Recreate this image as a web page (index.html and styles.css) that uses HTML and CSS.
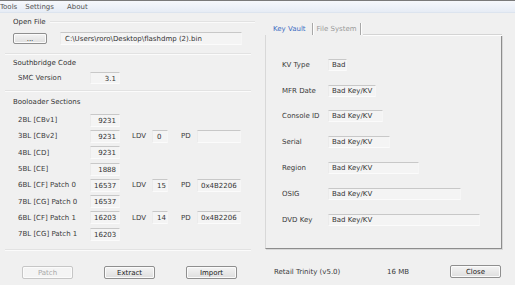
FILE: index.html
```html
<!DOCTYPE html>
<html lang="en">
<head>
  <meta charset="UTF-8" />
  <title>Flash Tool</title>
  <link rel="stylesheet" href="styles.css">
</head>
<body>
  <div class="menubar">
    <span class="menu-item">Tools</span>
    <span class="menu-item">Settings</span>
    <span class="menu-item">About</span>
  </div>

  <div class="main">
    <div class="left">
      <div class="group-title with-line">Open File</div>
      <div class="file-row">
        <button class="btn btn-browse">...</button>
        <div class="field path">C:\Users\roro\Desktop\flashdmp (2).bin</div>
      </div>

      <div class="sep sep-1"></div>

      <div class="group-title title-smc">Southbridge Code</div>
      <div class="row smc-row">
        <span class="row-label">SMC Version</span>
        <div class="field num smc-val">3.1</div>
      </div>

      <div class="sep sep-2"></div>

      <div class="group-title title-boot">Booloader Sections</div>
      <div class="boot-rows">
        <div class="row boot-row">
          <span class="row-label">2BL [CBv1]</span>
          <div class="field num">9231</div>
        </div>
        <div class="row boot-row">
          <span class="row-label">3BL [CBv2]</span>
          <div class="field num">9231</div>
          <span class="small-label">LDV</span>
          <div class="field ldv">0</div>
          <span class="small-label pd-label">PD</span>
          <div class="field pd"></div>
        </div>
        <div class="row boot-row">
          <span class="row-label">4BL [CD]</span>
          <div class="field num">9231</div>
        </div>
        <div class="row boot-row">
          <span class="row-label">5BL [CE]</span>
          <div class="field num">1888</div>
        </div>
        <div class="row boot-row">
          <span class="row-label">6BL [CF] Patch 0</span>
          <div class="field num">16537</div>
          <span class="small-label">LDV</span>
          <div class="field ldv">15</div>
          <span class="small-label pd-label">PD</span>
          <div class="field pd">0x4B2206</div>
        </div>
        <div class="row boot-row">
          <span class="row-label">7BL [CG] Patch 0</span>
          <div class="field num">16537</div>
        </div>
        <div class="row boot-row">
          <span class="row-label">6BL [CF] Patch 1</span>
          <div class="field num">16203</div>
          <span class="small-label">LDV</span>
          <div class="field ldv">14</div>
          <span class="small-label pd-label">PD</span>
          <div class="field pd">0x4B2206</div>
        </div>
        <div class="row boot-row">
          <span class="row-label">7BL [CG] Patch 1</span>
          <div class="field num">16203</div>
        </div>
      </div>

      <div class="sep sep-3"></div>

      <div class="actions">
        <button class="btn" disabled>Patch</button>
        <button class="btn">Extract</button>
        <button class="btn">Import</button>
      </div>
    </div>

    <div class="right">
      <div class="tabs">
        <span class="tab active">Key Vault</span>
        <span class="tab">File System</span>
        <span class="tab-fill"></span>
      </div>
      <div class="tab-panel">
        <div class="kv-row"><span class="kv-label">KV Type</span><div class="field kv" style="width: 19px">Bad</div></div>
        <div class="kv-row"><span class="kv-label">MFR Date</span><div class="field kv" style="width: 48px">Bad Key/KV</div></div>
        <div class="kv-row"><span class="kv-label">Console ID</span><div class="field kv" style="width: 55px">Bad Key/KV</div></div>
        <div class="kv-row"><span class="kv-label">Serial</span><div class="field kv" style="width: 62px">Bad Key/KV</div></div>
        <div class="kv-row"><span class="kv-label">Region</span><div class="field kv" style="width: 91px">Bad Key/KV</div></div>
        <div class="kv-row"><span class="kv-label">OSIG</span><div class="field kv" style="width: 133px">Bad Key/KV</div></div>
        <div class="kv-row"><span class="kv-label">DVD Key</span><div class="field kv" style="width: 152px">Bad Key/KV</div></div>
      </div>
      <div class="status">
        <span class="status-board">Retail Trinity (v5.0)</span>
        <span class="status-size">16 MB</span>
        <button class="btn btn-close">Close</button>
      </div>
    </div>
  </div>
</body>
</html>
```

FILE: styles.css
```css
body {
  margin: 0;
  padding: 0;
  width: 515px;
  height: 285px;
  overflow: hidden;
  background: #f0f0f0;
  font-family: "DejaVu Sans", Verdana, sans-serif;
  font-size: 7px;
  color: #3a3a3a;
}

.menubar {
  box-sizing: border-box;
  height: 13px;
  display: flex;
  align-items: center;
  border-top: 1px solid #7a7a7a;
  border-bottom: 1px solid #dce4ef;
  background: linear-gradient(to bottom, #f6f8fc, #e6ecf5);
  color: #555;
}

.menu-item {
  margin-right: 8px;
}

.menu-item:nth-child(2) {
  margin-right: 13px;
}

.main {
  display: flex;
}

/* left column */

.left {
  width: 258px;
  padding-top: 4px;
}

.group-title {
  height: 10px;
  line-height: 10px;
  padding-left: 13px;
  display: flex;
  align-items: center;
  color: #333;
}

.group-title.with-line::after {
  content: "";
  flex: 1;
  margin: 0 3px 0 4px;
  border-top: 1px solid #e2e2e2;
  border-bottom: 1px solid #fafafa;
}

.field {
  box-sizing: border-box;
  height: 13px;
  line-height: 12px;
  padding: 0 3px;
  background: #f4f4f4;
  border-top: 1px solid #c8c8c8;
  border-left: 1px solid #ebebeb;
  border-right: 1px solid #f6f6f6;
  border-bottom: 1px solid #fbfbfb;
  white-space: nowrap;
  color: #333;
}

.file-row {
  display: flex;
  align-items: center;
  margin-top: 5px;
  height: 13px;
  padding-left: 13px;
}

.path {
  width: 182px;
  margin-left: 13px;
  padding-left: 4px;
}

.btn {
  box-sizing: border-box;
  width: 51px;
  height: 13px;
  padding: 0;
  font-family: inherit;
  font-size: 7px;
  color: #222;
  background: linear-gradient(to bottom, #f4f4f4, #dedede);
  border: 1px solid #8f8f8f;
  border-radius: 2px;
  box-shadow: inset 0 0 0 1px #fbfbfb;
}

.btn:disabled {
  color: #a8a8a8;
  background: #f4f4f4;
  border-color: #c6c6c6;
}

.btn-browse {
  width: 34px;
  height: 11px;
  line-height: 6px;
}

.sep {
  margin-left: 5px;
  margin-right: 7px;
  border-top: 1px solid #e2e2e2;
  border-bottom: 1px solid #fbfbfb;
}

.sep-1 { margin-top: 8px; }
.sep-2 { margin-top: 6px; }
.sep-3 { margin-top: 7px; }

.title-smc { margin-top: 3px; }
.title-boot { margin-top: 5px; }

.row {
  display: flex;
  align-items: center;
  padding-left: 18px;
}

.row-label {
  width: 72px;
  white-space: nowrap;
}

.smc-row {
  margin-top: 4px;
  height: 12px;
}

.smc-val {
  width: 27px;
  height: 12px;
  text-align: right;
  padding-right: 5px;
}

.boot-rows {
  margin-top: 5px;
}

.boot-row {
  height: 16.3px;
}

.field.num {
  width: 30px;
  text-align: right;
  padding-right: 3px;
}

.small-label {
  margin-left: 12px;
  width: 20px;
}

.pd-label {
  margin-left: 13px;
  width: 16px;
}

.field.ldv {
  width: 16px;
  padding-left: 4px;
}

.field.pd {
  width: 44px;
}

.actions {
  display: flex;
  gap: 31px;
  margin-top: 15px;
  padding-left: 22px;
}

/* right column */

.right {
  width: 244px;
  padding-left: 7px;
}

.tabs {
  display: flex;
  align-items: stretch;
  height: 12px;
  margin-top: 10px;
  width: 237px;
}

.tab {
  display: flex;
  align-items: center;
  padding: 0 5px 0 8px;
  color: #9a9a9a;
  border-right: 1px solid #a8a8a8;
  box-shadow: 1px 0 0 #fdfdfd;
}

.tab.active {
  color: #3d6cc2;
  padding: 0 6px 0 8px;
}

.tab + .tab {
  padding-left: 4px;
  padding-right: 3px;
}

.tab-fill {
  flex: 1;
  margin-left: 2px;
  border-bottom: 1px solid #d4d4d4;
  box-shadow: 0 1px 0 #fdfdfd;
}

.tab-panel {
  box-sizing: border-box;
  width: 237px;
  height: 214px;
  padding-top: 17px;
  border-left: 1px solid #d8d8d8;
  border-right: 1px solid #8d8d8d;
  border-bottom: 1px solid #8d8d8d;
  box-shadow: 1px 1px 0 #d8d8d8;
}

.kv-row {
  display: flex;
  align-items: center;
  height: 25.8px;
  padding-left: 16px;
}

.kv-label {
  width: 46px;
}

.field.kv {
  height: 12px;
  line-height: 11px;
}

.status {
  display: flex;
  align-items: center;
  margin-top: 16px;
  height: 13px;
  padding-left: 9px;
}

.status-board {
  width: 113px;
}

.status-size {
  width: 63px;
}
```
